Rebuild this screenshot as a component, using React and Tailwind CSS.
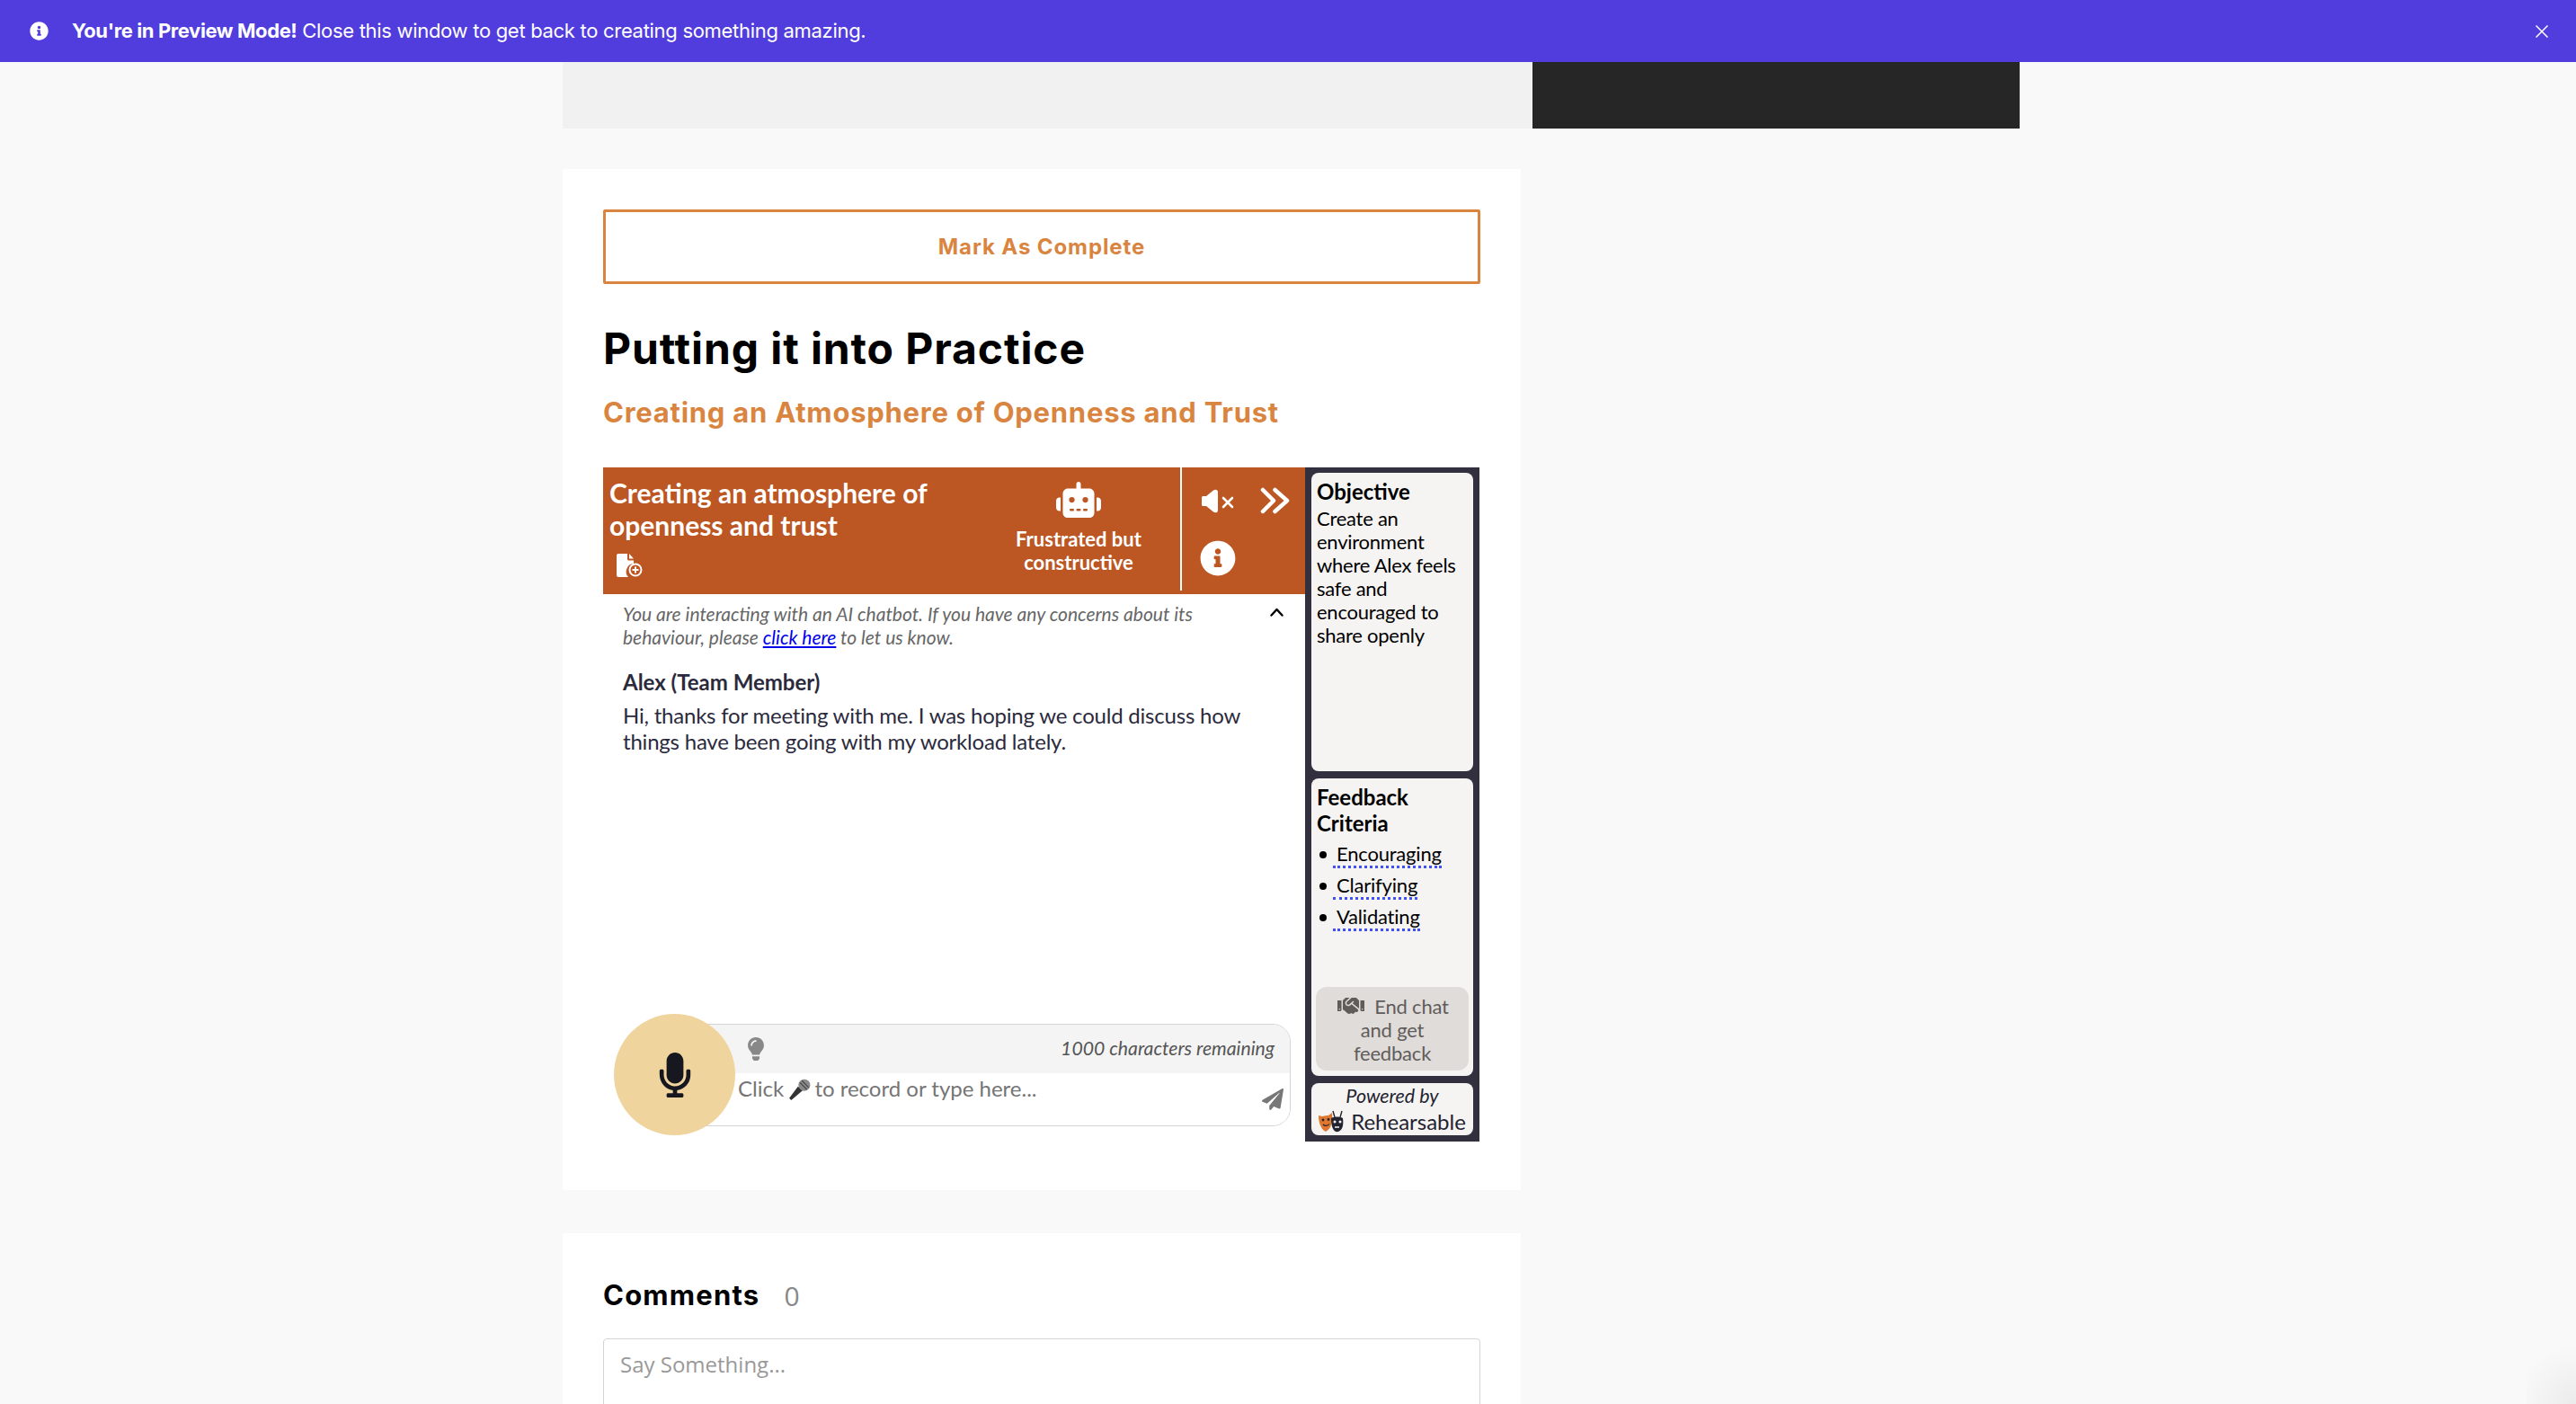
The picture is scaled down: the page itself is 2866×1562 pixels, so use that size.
import React from 'react';
import { FaInfoCircle, FaHandshake, FaMicrophone, FaLightbulb, FaPaperPlane } from 'react-icons/fa';
import { FaRobot } from 'react-icons/fa6';

const lato = "font-['Lato',sans-serif]";

const DocPlus = () => (
  <svg viewBox="0 0 29 26" className="h-[26px] w-[29px]" fill="#fff">
    <path d="M2 0h10v6a1.500 1.500 0 0 0 1.500 1.500H19v3.500a9 9 0 0 0-6 15H2a2 2 0 0 1-2-2V2a2 2 0 0 1 2-2z" />
    <path d="M14 0l5 5.500h-5z" />
    <circle cx="21" cy="18" r="6.500" fill="#BC5622" stroke="#fff" strokeWidth="2" />
    <path d="M21 14.500v7M17.500 18h7" stroke="#fff" strokeWidth="2" />
  </svg>
);

const Mute = () => (
  <svg viewBox="0 0 36 27" className="h-[27px] w-[36px]" fill="#fff">
    <path d="M1.500 8H5L13 1.500C15 0 18 .5 18 3.500v20c0 3-3 3.500-5 2L5 19H1.500A1.500 1.500 0 0 1 0 17.500v-8A1.500 1.500 0 0 1 1.500 8z" />
    <path d="M24 10l10 10M34 10L24 20" stroke="#fff" strokeWidth="2.600" strokeLinecap="round" />
  </svg>
);

const DoubleChevron = () => (
  <svg viewBox="0 0 33 30" className="h-[30px] w-[33px]" fill="none" stroke="#fff" strokeWidth="4.500" strokeLinecap="round" strokeLinejoin="round">
    <path d="M3 3l12 12L3 27" />
    <path d="M16.500 3l13.500 12-13.500 12" />
  </svg>
);

const ChevronUp = () => (
  <svg viewBox="0 0 15 10" className="h-[10px] w-[15px]" fill="none" stroke="#000" strokeWidth="2.400" strokeLinecap="round" strokeLinejoin="round">
    <path d="M1.500 8.500l6-6.500 6 6.500" />
  </svg>
);

const CloseX = () => (
  <svg viewBox="0 0 14 14" className="h-[14px] w-[14px]" fill="none" stroke="#fff" strokeWidth="1.500">
    <path d="M.5.500l13 13M13.500.500l-13 13" />
  </svg>
);

const MicEmoji = () => (
  <svg viewBox="0 0 24 24" className="-mr-[3px] -ml-[1px] inline-block h-[26px] w-[26px] align-[-5px]">
    <path d="M3 23L1 21l9-12 5 4z" fill="#333" />
    <circle cx="16.500" cy="7.500" r="6" fill="#8a8a8a" />
    <path d="M12 5l7 7M14 3l7 7" stroke="#444" strokeWidth="1" />
  </svg>
);

const Logo = () => (
  <svg viewBox="0 0 28 26" className="h-[26px] w-[28px]">
    <path d="M0 6l4 1c3-1 5-1 7-1l4-3c.5 8 .5 17-7 21C2 21 0 13 0 6z" fill="#E0772F" />
    <circle cx="5" cy="11" r="1.400" fill="#23222F" />
    <circle cx="11" cy="10.500" r="1.400" fill="#23222F" />
    <path d="M5 16c2 2 5 2 7-.5" stroke="#23222F" strokeWidth="1.200" fill="none" />
    <path d="M14 9c4-2 9-2 13 0 1 7 0 13-5 15-5 1-8-4-8-15z" fill="#23222F" />
    <path d="M18 8L16 1M24 8l2-7" stroke="#23222F" strokeWidth="1.400" />
    <circle cx="18" cy="13" r="1.500" fill="#f5f4f3" />
    <circle cx="24" cy="13" r="1.500" fill="#f5f4f3" />
    <path d="M18 19h5" stroke="#f5f4f3" strokeWidth="1.300" />
  </svg>
);

const Criterion = ({ label }) => (
  <li className="flex h-[35px] items-start">
    <span className="mt-[10px] ml-[3px] h-[8px] w-[8px] shrink-0 rounded-full bg-black" />
    <span className="ml-[7px] border-b-[3px] border-dotted border-[#3F51F5] pl-[4px] leading-[26px]">{label}</span>
  </li>
);

export default function App() {
  return (
    <div className="relative flex h-[1562px] flex-col overflow-hidden bg-[#F9F9F9]">
      <div className="flex h-[69px] shrink-0 items-center bg-[#513CDD] pr-[31px] pl-[33px] font-['Inter',sans-serif] text-[22px] tracking-[-0.3px] text-white">
        <FaInfoCircle className="h-[21px] w-[21px]" />
        <p className="ml-[26px] flex-1">
          <span className="font-bold tracking-[-0.4px]">You're in Preview Mode!</span> Close this window to get back to creating something amazing.
        </p>
        <CloseX />
      </div>

      <div className="ml-[626px] flex h-[74px] w-[1621px] shrink-0">
        <div className="w-[1079px] bg-[#F1F1F1]" />
        <div className="flex-1 bg-[#262626]" />
      </div>

      <section className="mt-[45px] ml-[626px] w-[1066px] shrink-0 bg-white px-[45px] pt-[45px] pb-[54px]">
        <button className="flex h-[83px] w-full items-center justify-center rounded-[2px] border-[3px] border-[#D9853F] font-['Inter',sans-serif] text-[24px] font-bold tracking-[0.9px] text-[#D9853F]">
          Mark As Complete
        </button>
        <h1 className="mt-[44px] font-['Inter',sans-serif] text-[48px] leading-[56px] font-bold tracking-[0.9px] text-black">Putting it into Practice</h1>
        <h2 className="mt-[23px] font-['Inter',sans-serif] text-[31px] leading-[40px] font-bold tracking-[0.75px] text-[#D9853F]">
          Creating an Atmosphere of Openness and Trust
        </h2>

        <div className={`mt-[41px] flex h-[750px] ${lato}`}>
          <div className="flex w-[781px] flex-col">
            <header className="flex h-[141px] shrink-0 bg-[#BC5622] text-white">
              <div className="flex w-[642px] pt-[10px] pl-[7px]">
                <div className="w-[409px]">
                  <p className="w-[370px] text-[30px] leading-[36px] font-bold">Creating an atmosphere of openness and trust</p>
                  <div className="mt-[14px] ml-[8px]">
                    <DocPlus />
                  </div>
                </div>
                <div className="flex flex-1 flex-col items-center pt-[6px]">
                  <FaRobot className="h-[40px] w-[50px]" />
                  <p className="mt-[11px] text-center text-[22px] leading-[26px] font-bold">
                    Frustrated but
                    <br />
                    constructive
                  </p>
                </div>
              </div>
              <div className="mb-[4px] w-[2px] bg-white" />
              <div className="flex-1 pt-[22px] pl-[20px]">
                <div className="ml-[2px] flex h-[30px] items-center">
                  <Mute />
                  <span className="ml-[29px]">
                    <DoubleChevron />
                  </span>
                </div>
                <FaInfoCircle className="mt-[29px] h-[40px] w-[40px]" />
              </div>
            </header>

            <div className="flex px-[22px] pt-[9px]">
              <p className="w-[670px] text-[21px] leading-[26px] text-[#666] italic">
                You are interacting with an AI chatbot. If you have any concerns about its behaviour, please{' '}
                <a className="text-[#0000EE] underline">click here</a> to let us know.
              </p>
              <span className="mt-[6px] ml-[50px]">
                <ChevronUp />
              </span>
            </div>

            <div className="px-[22px] pt-[22px] text-[24px] text-[#2B2A3D]">
              <p className="leading-[30px] font-bold">Alex (Team Member)</p>
              <p className="mt-[7px] w-[720px] leading-[29px] tracking-[-0.21px]">
                Hi, thanks for meeting with me. I was hoping we could discuss how things have been going with my workload lately.
              </p>
            </div>

            <div className="mt-auto mb-[7px] ml-[12px] flex items-center">
              <div className="z-10 flex h-[135px] w-[135px] shrink-0 items-center justify-center rounded-full bg-[#F0D49E]">
                <FaMicrophone className="h-[50px] w-[36px] text-[#17171F]" />
              </div>
              <div className="-ml-[60px] flex h-[114px] w-[678px] flex-col overflow-hidden rounded-[20px] border border-[#D5D5D5]">
                <div className="flex h-[54px] shrink-0 items-center bg-[#F4F4F4] pr-[17px] pl-[72px] text-[21.200px] text-[#555] italic">
                  <FaLightbulb className="h-[26px] w-[20px] text-[#888]" />
                  <span className="ml-auto">1000 characters remaining</span>
                </div>
                <div className="flex flex-1 bg-white pl-[62px]">
                  <span className="mt-[2px] text-[24px] leading-[30px] text-[#757575]">
                    Click <MicEmoji /> to record or type here...
                  </span>
                  <FaPaperPlane className="mt-[17px] mr-[7px] ml-auto h-[24px] w-[24px] text-[#777]" />
                </div>
              </div>
            </div>
          </div>

          <aside className="flex w-[194px] flex-col gap-[8px] bg-[#32303F] px-[7px] pt-[6px] pb-[7px] text-black">
            <div className="h-[332px] rounded-[8px] bg-[#F5F4F3] px-[6px] pt-[7px]">
              <h3 className="text-[24px] leading-[28px] font-bold">Objective</h3>
              <p className="mt-[3px] text-[22px] leading-[26px] tracking-[-0.25px]">Create an environment where Alex feels safe and encouraged to share openly</p>
            </div>
            <div className="flex h-[332px] flex-col rounded-[8px] bg-[#F5F4F3] pt-[6px] pb-[6px]">
              <h3 className="px-[6px] text-[24px] leading-[29px] font-bold">Feedback Criteria</h3>
              <ul className="mt-[7px] px-[6px] text-[22px] tracking-[-0.2px]">
                <Criterion label="Encouraging" />
                <Criterion label="Clarifying" />
                <Criterion label="Validating" />
              </ul>
              <button className="mx-[5px] mt-auto h-[93px] rounded-[12px] bg-[#E0DCDA] px-[8px] pt-[3px] text-center text-[22px] leading-[26px] tracking-[-0.2px] text-[#605C5A]">
                <FaHandshake className="mr-[9px] inline-block h-[24px] w-[34px] align-[-3px]" />
                End chat and get feedback
              </button>
            </div>
            <div className="flex h-[58px] flex-col items-center overflow-hidden rounded-[8px] bg-[#F5F4F3]">
              <p className="text-[21.500px] leading-[28px] text-[#23222F] italic">Powered by</p>
              <div className="flex items-center gap-[8px] text-[24px] leading-[30px] text-[#23222F]">
                <Logo />
                <span>Rehearsable</span>
              </div>
            </div>
          </aside>
        </div>
      </section>

      <section className="mt-[48px] ml-[626px] w-[1066px] flex-1 bg-white px-[45px] pt-[50px]">
        <div className="flex h-[38px] items-center">
          <h2 className="font-['Inter',sans-serif] text-[31px] font-bold tracking-[1.2px] text-black">Comments</h2>
          <span className="ml-[27px] font-['Open_Sans',sans-serif] text-[30px] text-[#888]">0</span>
        </div>
        <div className="mt-[29px] h-[200px] rounded-[4px] border border-[#D5D5D5] px-[18px] pt-[10px] font-['Open_Sans',sans-serif] text-[24px] text-[#999]">
          Say Something...
        </div>
      </section>

      {/* faint corner shade, bottom right */}
      <div className="absolute right-0 bottom-0 h-[75px] w-[55px] bg-[radial-gradient(circle_at_100%_100%,#ebebeb,#f9f9f9_72%)]" />
    </div>
  );
}
